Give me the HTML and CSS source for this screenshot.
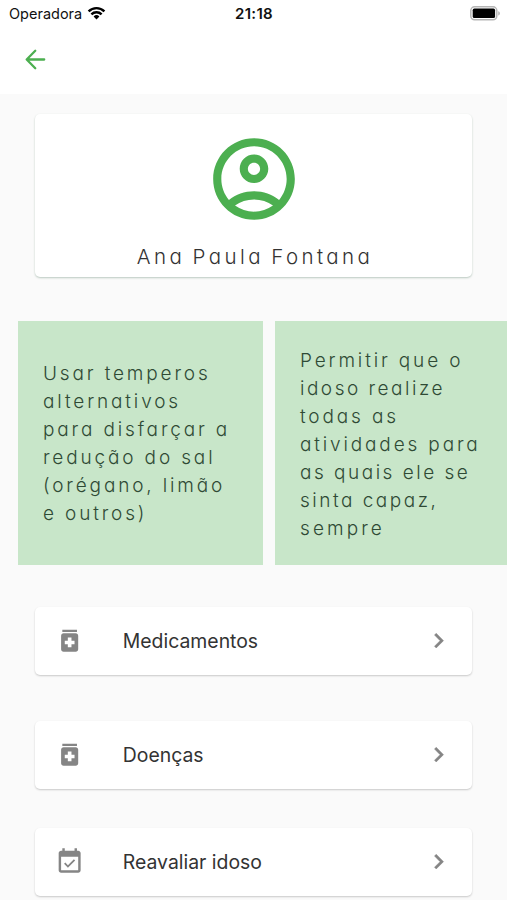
FILE: index.html
```html
<!DOCTYPE html>
<html lang="pt-BR">
<head>
<meta charset="utf-8">
<title>Ana Paula Fontana</title>
<link rel="stylesheet" href="styles.css">
</head>
<body>
<header class="top">
  <div class="status">
    <div class="carrier"><span>Operadora</span>
      <svg class="wifi" viewBox="0 0 19 14"><path d="M1.6 5.3a11.3 11.3 0 0 1 15.8 0M4.4 8.3a7.3 7.3 0 0 1 10.2 0" fill="none" stroke="#000" stroke-width="2.4"/><path d="M9.5 13.4l-2.9-2.9a4.2 4.2 0 0 1 5.8 0z"/></svg>
    </div>
    <time class="clock">21:18</time>
    <svg class="battery" viewBox="0 0 31 15"><rect x=".8" y=".8" width="26" height="13" rx="3.8" fill="#fff" stroke="#b5b5b5" stroke-width="1.5"/><rect x="2.7" y="2.6" width="22.4" height="9.4" rx="1.6"/><path d="M28.3 5.2c2 .7 2 3.6 0 4.3z" fill="#aaa"/></svg>
  </div>
  <svg class="back" viewBox="0 0 24 24"><path d="M19.2 12H5M11.8 4.8L4.7 12l7.1 7.2" fill="none" stroke="#4caf50" stroke-width="1.9" stroke-linecap="round" stroke-linejoin="round"/></svg>
</header>
<main>
  <section class="card profile">
    <svg class="avatar" viewBox="0 0 24 24"><path d="M12 2C6.48 2 2 6.48 2 12s4.48 10 10 10 10-4.48 10-10S17.52 2 12 2zM7.35 18.5C8.66 17.56 10.26 17 12 17s3.34.56 4.65 1.5C15.34 19.44 13.74 20 12 20s-3.34-.56-4.65-1.5zm10.79-1.38C16.45 15.8 14.32 15 12 15s-4.45.8-6.14 2.12C4.7 15.73 4 13.95 4 12c0-4.42 3.58-8 8-8s8 3.58 8 8c0 1.95-.7 3.73-1.86 5.12zM12 6c-1.93 0-3.5 1.57-3.5 3.5S10.07 13 12 13s3.5-1.57 3.5-3.5S13.93 6 12 6zm0 5c-.83 0-1.5-.67-1.5-1.5S11.17 8 12 8s1.5.67 1.5 1.5S12.83 11 12 11z"/></svg>
    <h1 class="name">Ana Paula Fontana</h1>
  </section>
  <section class="tips">
    <p class="tip">Usar temperos<br>alternativos<br>para disfarçar a<br>redução do sal<br>(orégano, limão<br>e outros)</p>
    <p class="tip lower">Permitir que o<br><span class="tight">idoso realize</span><br>todas as<br>atividades para<br><span class="tight">as quais ele se</span><br><span class="tight">sinta capaz,</span><br><span class="wide">sempre</span></p>
  </section>
  <nav class="menu">
    <a class="card row">
      <svg class="icon" viewBox="0 0 24 24"><path d="M6 3h12v2H6zm11 3H7c-1.1 0-2 .9-2 2v11c0 1.1.9 2 2 2h10c1.1 0 2-.9 2-2V8c0-1.1-.9-2-2-2zm-1 9h-2.5v2.5h-3V15H8v-3h2.5V9.5h3V12H16v3z"/></svg>
      <span class="label">Medicamentos</span>
      <svg class="icon chevron" viewBox="0 0 24 24"><path d="M10 6L8.59 7.41 13.17 12l-4.58 4.59L10 18l6-6z"/></svg>
    </a>
    <a class="card row">
      <svg class="icon" viewBox="0 0 24 24"><path d="M6 3h12v2H6zm11 3H7c-1.1 0-2 .9-2 2v11c0 1.1.9 2 2 2h10c1.1 0 2-.9 2-2V8c0-1.1-.9-2-2-2zm-1 9h-2.5v2.5h-3V15H8v-3h2.5V9.5h3V12H16v3z"/></svg>
      <span class="label">Doenças</span>
      <svg class="icon chevron" viewBox="0 0 24 24"><path d="M10 6L8.59 7.41 13.17 12l-4.58 4.59L10 18l6-6z"/></svg>
    </a>
    <a class="card row last">
      <svg class="icon" viewBox="0 0 24 24"><path d="M16.53 11.06L15.47 10l-4.88 4.88-2.12-2.12-1.06 1.06L10.59 17l5.94-5.94zM19 3h-1V1h-2v2H8V1H6v2H5c-1.11 0-1.99.9-1.99 2L3 19c0 1.1.89 2 2 2h14c1.1 0 2-.9 2-2V5c0-1.1-.9-2-2-2zm0 16H5V8h14v11z"/></svg>
      <span class="label">Reavaliar idoso</span>
      <svg class="icon chevron" viewBox="0 0 24 24"><path d="M10 6L8.59 7.41 13.17 12l-4.58 4.59L10 18l6-6z"/></svg>
    </a>
  </nav>
</main>
</body>
</html>
```
FILE: styles.css
```css
* { box-sizing: border-box; }
body {
  margin: 0;
  height: 900px;
  overflow: hidden;
  background: #fafafa;
  color: #333;
  font-family: Inter, "Liberation Sans", sans-serif;
}
svg { display: block; flex: none; }
.top { height: 94px; background: #fff; }
.status {
  display: grid;
  grid-template-columns: 1fr auto 1fr;
  align-items: center;
  height: 27px;
  padding: 0 7px 0 9px;
  color: #111;
  font-size: 14.5px;
}
.carrier { display: flex; align-items: center; gap: 5px; }
.wifi { width: 19px; height: 14px; margin-top: -2px; }
.clock { margin-right: 1px; font-size: 15px; font-weight: 600; letter-spacing: .3px; }
.battery { width: 31px; height: 15px; margin-right: -1px; justify-self: end; }
.back { width: 29px; height: 29px; margin: 18px 0 0 21px; }
.card {
  background: #fff;
  border-radius: 5px;
  box-shadow: 0 1px 2px rgba(0, 0, 0, .2);
}
.profile {
  display: flex;
  flex-direction: column;
  align-items: center;
  height: 163px;
  margin: 20px 35px 44px;
  padding-top: 16px;
  box-shadow: 0 1px 2px rgba(40, 90, 60, .3);
}
.avatar { width: 98px; height: 98px; fill: #4caf50; }
.name {
  margin: 15px 0 0;
  padding-left: 3px;
  font-size: 20.5px;
  font-weight: 300;
  line-height: 28px;
  letter-spacing: 3.4px;
  word-spacing: -1.8px;
  font-feature-settings: "cv11";
}
.tips { display: flex; gap: 12px; padding-left: 18px; }
.tip {
  flex: none;
  width: 245px;
  height: 244px;
  margin: 0;
  padding: 39px 0 0 25px;
  background: #c8e6c9;
  color: #2f4a35;
  font-size: 19px;
  font-weight: 300;
  line-height: 28px;
  letter-spacing: 2.85px;
  white-space: nowrap;
  font-feature-settings: "cv11";
}
.lower { padding-top: 26px; }
.tight { letter-spacing: 2.5px; }
.wide { letter-spacing: 3.1px; }
.menu { display: flex; flex-direction: column; gap: 46px; padding: 42px 35px 0; }
.row {
  display: flex;
  align-items: center;
  height: 68px;
  padding: 0 19px 0 19.5px;
}
.last { margin-top: -7px; }
.icon { width: 29.3px; height: 29.3px; fill: #858585; }
.chevron { stroke: #858585; stroke-width: .4; }
.label { flex: 1; margin-left: 39px; font-size: 19.4px; }
```
